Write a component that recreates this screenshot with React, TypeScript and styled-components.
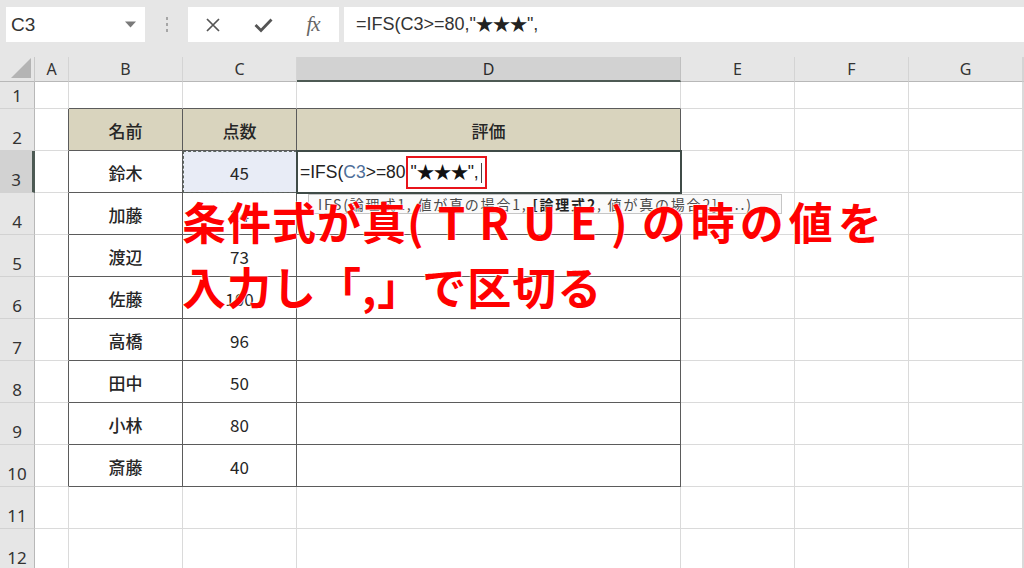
import React from 'react';
import styled, { createGlobalStyle } from 'styled-components';

const GlobalStyle = createGlobalStyle`
  html, body {
    margin: 0;
    padding: 0;
    background: #fff;
  }
  body {
    font-family: "Noto Sans CJK JP", "Noto Sans", sans-serif;
  }
`;

const COLS = ['A', 'B', 'C', 'D', 'E', 'F', 'G'];

interface Row {
  name: string;
  score: string;
}

const people: Row[] = [
  { name: '鈴木', score: '45' },
  { name: '加藤', score: '24' },
  { name: '渡辺', score: '73' },
  { name: '佐藤', score: '100' },
  { name: '高橋', score: '96' },
  { name: '田中', score: '50' },
  { name: '小林', score: '80' },
  { name: '斎藤', score: '40' },
];

const Screen = styled.div`
  position: relative;
  width: 1024px;
  height: 568px;
  overflow: hidden;
  background: #e6e6e6;
`;

const Toolbar = styled.div`
  display: flex;
  align-items: stretch;
  height: 35px;
  padding: 7px 0 15px 6px;
`;

const NameBox = styled.div`
  width: 139px;
  background: #fff;
  display: flex;
  align-items: center;
  justify-content: space-between;
  padding: 0 9px 0 5px;
  box-sizing: border-box;
  font-family: "Liberation Sans", "Noto Sans", sans-serif;
  font-size: 19px;
  color: #333;
`;

const Grip = styled.div`
  width: 43px;
  display: flex;
  flex-direction: column;
  align-items: center;
  justify-content: center;
  gap: 3px;

  span {
    width: 2px;
    height: 3px;
    background: #a6a6a6;
  }
`;

const ButtonGroup = styled.div`
  width: 151px;
  background: #fff;
  display: flex;
`;

const ToolButton = styled.div`
  width: 50px;
  display: flex;
  align-items: center;
  justify-content: center;
  color: #555;
`;

const Fx = styled.span`
  font-family: "Liberation Serif", serif;
  font-style: italic;
  font-size: 21px;
  color: #666;
  letter-spacing: -1px;
`;

const FormulaInput = styled.div`
  flex: 1;
  margin-left: 5px;
  background: #fff;
  display: flex;
  align-items: center;
  padding-left: 12px;
  font-family: "Liberation Sans", "Noto Sans", sans-serif;
  font-size: 18px;
  color: #333;
  white-space: pre;

  b {
    color: #222;
    font-size: 19px;
  }
`;

const Sheet = styled.div`
  display: grid;
  grid-template-columns: 35px 34px 114px 114px 384px 114px 114px 114px 1fr;
  grid-template-rows: 25px 27px repeat(11, 42px);
  background: #fff;
`;

const Corner = styled.div`
  position: relative;
  background: #e6e6e6;
  border-right: 1px solid #c9c9c9;
  border-bottom: 1px solid #b8b8b8;

  &::after {
    content: '';
    position: absolute;
    right: 3px;
    bottom: 3px;
    width: 0;
    height: 0;
    border-left: 20px solid transparent;
    border-bottom: 20px solid #b4b4b4;
  }
`;

const ColHeader = styled.div<{ $active?: boolean }>`
  display: flex;
  align-items: center;
  justify-content: center;
  box-sizing: border-box;
  background: ${(p) => (p.$active ? '#d2d2d2' : '#e6e6e6')};
  border-right: 1px solid ${(p) => (p.$active ? '#c0c0c0' : '#d4d4d4')};
  border-bottom: ${(p) => (p.$active ? '2px solid #4d5a54' : '1px solid #b8b8b8')};
  font-family: "Noto Sans", sans-serif;
  font-size: 16px;
  color: ${(p) => (p.$active ? '#2b2b2b' : '#333')};
`;

const RowHeader = styled.div<{ $active?: boolean }>`
  display: flex;
  align-items: flex-end;
  justify-content: center;
  padding-bottom: 1px;
  box-sizing: border-box;
  background: ${(p) => (p.$active ? '#d2d2d2' : '#e6e6e6')};
  border-bottom: 1px solid #d2d2d2;
  border-right: ${(p) => (p.$active ? '3px solid #4d5a54' : '1px solid #b8b8b8')};
  font-family: "Noto Sans", sans-serif;
  font-size: 17px;
  color: #333;
`;

const Cell = styled.div<{
  $rd?: boolean;
  $bd?: boolean;
  $bg?: string;
  $num?: boolean;
}>`
  display: flex;
  align-items: center;
  justify-content: center;
  box-sizing: border-box;
  min-width: 0;
  background: ${(p) => p.$bg || '#fff'};
  border-right: 1px solid ${(p) => (p.$rd ? '#5b5b5b' : '#dadada')};
  border-bottom: 1px solid ${(p) => (p.$bd ? '#5b5b5b' : '#dadada')};
  font-family: "Noto Sans CJK JP", sans-serif;
  font-size: 17px;
  font-weight: ${(p) => (p.$num ? 400 : 500)};
  color: #262626;
  padding-top: 2px;
`;

const RefCell = styled(Cell)`
  position: relative;
  background: #e8ecf6;
  outline: 1px dashed #5d6661;
  outline-offset: -1px;
`;

const EditCell = styled(Cell)`
  position: relative;
  z-index: 2;
  justify-content: flex-start;
  padding-left: 3px;
  outline: 2px solid #3f4b47;
  outline-offset: -1px;
  font-family: "Liberation Sans", "Noto Sans", sans-serif;
  font-size: 17.5px;
  font-weight: 400;
  color: #222;
  white-space: pre;
`;

const RefText = styled.span`
  color: #4f6f9a;
`;

const ArgBox = styled.span`
  display: inline-flex;
  align-items: center;
  height: 33px;
  box-sizing: border-box;
  padding: 0 3px 0 2px;
  margin-left: -4px;
  border: 2px solid #e8141b;
  background: #fff;

  b {
    font-size: 19px;
    color: #111;
  }
`;

const Caret = styled.span`
  display: inline-block;
  width: 1px;
  height: 20px;
  margin-left: 2px;
  background: #444;
`;

const Tooltip = styled.div`
  position: absolute;
  left: 308px;
  top: 194px;
  width: 474px;
  height: 20px;
  box-sizing: border-box;
  z-index: 3;
  background: #fafafa;
  border: 1px solid #c6c6c6;
  display: flex;
  align-items: center;
  padding-left: 9px;
  font-family: "Noto Sans CJK JP", sans-serif;
  font-size: 14px;
  color: #4a4a4a;
  white-space: pre;
  letter-spacing: 1.8px;

  b {
    color: #222;
    font-weight: 700;
  }
`;

const Callout = styled.div`
  position: absolute;
  left: 182px;
  top: 189px;
  z-index: 4;
  font-family: "Noto Sans CJK JP", sans-serif;
  font-weight: 700;
  font-size: 44px;
  line-height: 65px;
  letter-spacing: 1px;
  color: #ff0000;
  white-space: pre;
  text-shadow: 0 0 2px #fff, 0 0 2px #fff;
`;

const Spaced = styled.span<{ $gap: number }>`
  letter-spacing: ${(p) => p.$gap}px;
`;

const DropArrow = () => (
  <svg width="11" height="7" viewBox="0 0 11 7">
    <path d="M0 0.5 L11 0.5 L5.5 6.5 Z" fill="#7a7a7a" />
  </svg>
);

const CrossIcon = () => (
  <svg width="16" height="16" viewBox="0 0 16 16">
    <path d="M2 2 L14 14 M14 2 L2 14" stroke="#555" strokeWidth="1.7" fill="none" />
  </svg>
);

const CheckIcon = () => (
  <svg width="19" height="16" viewBox="0 0 19 16">
    <path d="M1.5 8 L7 13.5 L17.5 2.5" stroke="#555" strokeWidth="2.8" fill="none" />
  </svg>
);

const renderCell = (row: number, col: number) => {
  const key = `${row}-${col}`;
  // table sits on B2:D10
  const inTable = row >= 2 && row <= 10 && col >= 1 && col <= 3;
  const rd = inTable || (col === 0 && row >= 2 && row <= 10);
  const bd = inTable || (row === 1 && col >= 1 && col <= 3);
  const head = row === 2 && inTable;
  const bg = head ? '#d9d4be' : undefined;

  if (row === 3 && col === 2) {
    return (
      <RefCell key={key} $rd $bd $num>
        45
      </RefCell>
    );
  }
  if (row === 3 && col === 3) {
    return (
      <EditCell key={key} $rd $bd>
        =IFS(<RefText>C3</RefText>&gt;=80,
        <ArgBox>
          "<b>★★★</b>",<Caret />
        </ArgBox>
      </EditCell>
    );
  }

  let text = '';
  if (head) text = ['名前', '点数', '評価'][col - 1];
  else if (inTable && row >= 3) {
    const p = people[row - 3];
    if (col === 1) text = p.name;
    if (col === 2) text = p.score;
  }
  return (
    <Cell key={key} $rd={rd} $bd={bd} $bg={bg} $num={col === 2 && row >= 3}>
      {text}
    </Cell>
  );
};

const App = () => {
  const rows = Array.from({ length: 12 }, (_, i) => i + 1);

  return (
    <>
      <GlobalStyle />
      <Screen>
        <Toolbar>
          <NameBox>
            C3
            <DropArrow />
          </NameBox>
          <Grip>
            <span />
            <span />
            <span />
          </Grip>
          <ButtonGroup>
            <ToolButton>
              <CrossIcon />
            </ToolButton>
            <ToolButton>
              <CheckIcon />
            </ToolButton>
            <ToolButton>
              <Fx>fx</Fx>
            </ToolButton>
          </ButtonGroup>
          <FormulaInput>
            =IFS(C3&gt;=80,"<b>★★★</b>",
          </FormulaInput>
        </Toolbar>

        <Sheet>
          <Corner />
          {COLS.map((c) => (
            <ColHeader key={c} $active={c === 'D'}>
              {c}
            </ColHeader>
          ))}
          <ColHeader />
          {rows.map((r) => (
            <React.Fragment key={r}>
              <RowHeader $active={r === 3}>{r}</RowHeader>
              {COLS.map((_, ci) => renderCell(r, ci))}
              <Cell />
            </React.Fragment>
          ))}
        </Sheet>

        <Tooltip>
          IFS(論理式1, 値が真の場合1, <b>[論理式2</b>, 値が真の場合2], ...)
        </Tooltip>

        <Callout>
          条件式が真<Spaced $gap={14}>(TRUE)</Spaced>
          <Spaced $gap={5}>の時の値を</Spaced>
          {'\n'}入力し「,」で区切る
        </Callout>
      </Screen>
    </>
  );
};

export default App;
